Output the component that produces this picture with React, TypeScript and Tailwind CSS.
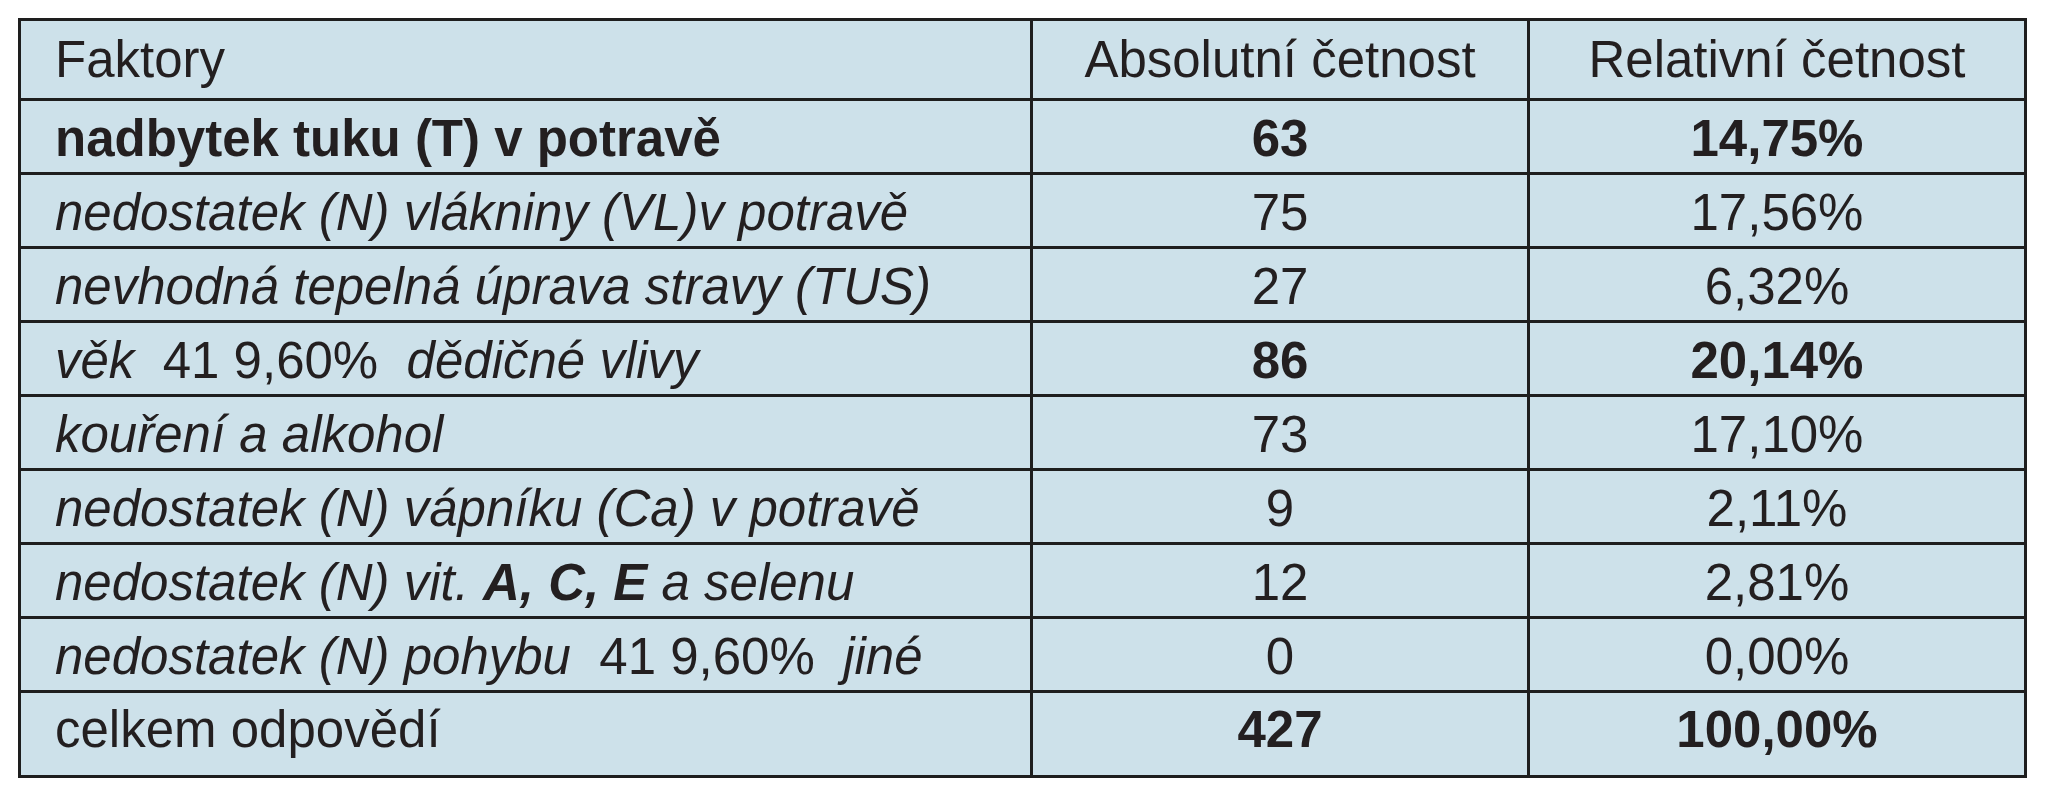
import React from "react";

type Row = {
  label: React.ReactNode;
  abs: string;
  rel: string;
  bold?: boolean;
};

const rows: Row[] = [
  { label: <span className="font-bold">nadbytek tuku (T) v potravě</span>, abs: "63", rel: "14,75%", bold: true },
  { label: <i>nedostatek (N) vlákniny (VL)v potravě</i>, abs: "75", rel: "17,56%" },
  { label: <i>nevhodná tepelná úprava stravy (TUS)</i>, abs: "27", rel: "6,32%" },
  {
    label: (
      <>
        <i>věk</i>
        {"  41 9,60%  "}
        <i>dědičné vlivy</i>
      </>
    ),
    abs: "86",
    rel: "20,14%",
    bold: true,
  },
  { label: <i>kouření a alkohol</i>, abs: "73", rel: "17,10%" },
  { label: <i>nedostatek (N) vápníku (Ca) v potravě</i>, abs: "9", rel: "2,11%" },
  {
    label: (
      <i>
        nedostatek (N) vit. <span className="font-bold">A, C, E</span> a selenu
      </i>
    ),
    abs: "12",
    rel: "2,81%",
  },
  {
    label: (
      <>
        <i>nedostatek (N) pohybu</i>
        {"  41 9,60%  "}
        <i>jiné</i>
      </>
    ),
    abs: "0",
    rel: "0,00%",
  },
];

export default function App() {
  return (
    <div className="min-h-[800px] bg-white pl-[18px] pt-[18px] font-['Liberation_Sans',Arial,sans-serif] text-[51px] leading-none text-[#231f20]">
      <table className="w-[2008px] table-fixed border-collapse border-[3px] border-[#2b2b2b] bg-[#cde1ea]">
        <colgroup>
          <col className="w-[1012px]" />
          <col className="w-[497px]" />
          <col className="w-[497px]" />
        </colgroup>
        <thead>
          <tr className="h-[80px]">
            <th className="border-[3px] border-[#1e1e1e] pl-[34px] text-left font-normal">Faktory</th>
            <th className="border-[3px] border-[#1e1e1e] text-center font-normal">Absolutní četnost</th>
            <th className="border-[3px] border-[#1e1e1e] text-center font-normal">Relativní četnost</th>
          </tr>
        </thead>
        <tbody>
          {rows.map((r, i) => (
            <tr key={i} className="h-[74px]">
              <td className="whitespace-pre border-[3px] border-[#1e1e1e] pt-[4px] pl-[34px]">{r.label}</td>
              <td className={`border-[3px] border-[#1e1e1e] pt-[4px] text-center ${r.bold ? "font-bold" : ""}`}>{r.abs}</td>
              <td className={`border-[3px] border-[#1e1e1e] pt-[4px] text-center ${r.bold ? "font-bold" : ""}`}>{r.rel}</td>
            </tr>
          ))}
          <tr className="h-[85px]">
            <td className="border-[3px] border-[#1e1e1e] pb-[10px] pl-[34px]">celkem odpovědí</td>
            <td className="border-[3px] border-[#1e1e1e] pb-[10px] text-center font-bold">427</td>
            <td className="border-[3px] border-[#1e1e1e] pb-[10px] text-center font-bold">100,00%</td>
          </tr>
        </tbody>
      </table>
    </div>
  );
}
